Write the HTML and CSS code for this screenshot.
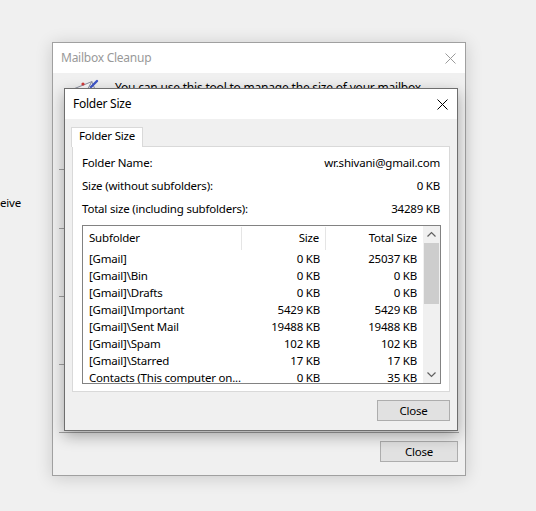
FILE: index.html
```html
<!DOCTYPE html>
<html lang="en">
<head>
<meta charset="utf-8">
<title>Folder Size</title>
<link rel="stylesheet" href="styles.css">
</head>
<body>
<div class="desktop">
  <span class="behind-text">eive</span>

  <div class="dialog outer">
    <div class="titlebar">
      <span class="title inactive">Mailbox Cleanup</span>
      <svg class="xbtn" width="11" height="11" viewBox="0 0 11 11"><path d="M0.5 0.5 L10.5 10.5 M10.5 0.5 L0.5 10.5" stroke="#9a9a9a" stroke-width="1"/></svg>
    </div>
    <div class="outer-body">
      <div class="intro">
        <svg class="intro-icon" width="32" height="32" viewBox="0 0 32 32">
          <g transform="rotate(-22 16 16)">
            <rect x="3" y="7" width="24" height="17" fill="#fafafa" stroke="#8a8fa0"/>
            <path d="M3 7 L15 17 L27 7" fill="none" stroke="#8a8fa0"/>
          </g>
          <circle cx="14" cy="6" r="1.6" fill="#d23b3b"/>
          <path d="M22 9 L28 3" stroke="#3e55c8" stroke-width="2.4" stroke-linecap="round"/>
        </svg>
        <p class="intro-text">You can use this tool to manage the size of your mailbox.</p>
      </div>
      <div class="groups">
        <div class="group g1"></div>
        <div class="group g2"></div>
        <div class="group g3"></div>
        <div class="group g4"></div>
      </div>
      <div class="footer">
        <div class="footer-rule"></div>
        <div class="footer-buttons">
          <button class="btn btn-outer">Close</button>
        </div>
      </div>
    </div>
  </div>

  <div class="dialog inner">
    <div class="titlebar">
      <span class="title">Folder Size</span>
      <svg class="xbtn" width="11" height="11" viewBox="0 0 11 11"><path d="M0.5 0.5 L10.5 10.5 M10.5 0.5 L0.5 10.5" stroke="#000" stroke-width="1"/></svg>
    </div>
    <div class="inner-body">
      <div class="tabs">
        <div class="tab">Folder Size</div>
      </div>
      <div class="panel">
        <div class="info-row"><span>Folder Name:</span><span>wr.shivani@gmail.com</span></div>
        <div class="info-row"><span>Size (without subfolders):</span><span>0 KB</span></div>
        <div class="info-row"><span>Total size (including subfolders):</span><span>34289 KB</span></div>
        <div class="list">
          <div class="table">
            <div class="hdr">
              <div class="cell c1 hcell">Subfolder</div>
              <div class="cell num hcell">Size</div>
              <div class="cell num">Total Size</div>
            </div>
            <div class="row"><div class="cell c1">[Gmail]</div><div class="cell num">0 KB</div><div class="cell num">25037 KB</div></div>
            <div class="row"><div class="cell c1">[Gmail]\Bin</div><div class="cell num">0 KB</div><div class="cell num">0 KB</div></div>
            <div class="row"><div class="cell c1">[Gmail]\Drafts</div><div class="cell num">0 KB</div><div class="cell num">0 KB</div></div>
            <div class="row"><div class="cell c1">[Gmail]\Important</div><div class="cell num">5429 KB</div><div class="cell num">5429 KB</div></div>
            <div class="row"><div class="cell c1">[Gmail]\Sent Mail</div><div class="cell num">19488 KB</div><div class="cell num">19488 KB</div></div>
            <div class="row"><div class="cell c1">[Gmail]\Spam</div><div class="cell num">102 KB</div><div class="cell num">102 KB</div></div>
            <div class="row"><div class="cell c1">[Gmail]\Starred</div><div class="cell num">17 KB</div><div class="cell num">17 KB</div></div>
            <div class="row"><div class="cell c1">Contacts (This computer on...</div><div class="cell num">0 KB</div><div class="cell num">35 KB</div></div>
          </div>
          <div class="scrollbar">
            <div class="sb-btn"><svg width="17" height="17" viewBox="0 0 17 17"><path d="M4.5 10.5 L8.5 6.5 L12.5 10.5" fill="none" stroke="#606060" stroke-width="1.2"/></svg></div>
            <div class="sb-thumb"></div>
            <div class="sb-track"></div>
            <div class="sb-btn"><svg width="17" height="17" viewBox="0 0 17 17"><path d="M4.5 6.5 L8.5 10.5 L12.5 6.5" fill="none" stroke="#606060" stroke-width="1.2"/></svg></div>
          </div>
        </div>
      </div>
      <div class="inner-footer">
        <button class="btn btn-inner">Close</button>
      </div>
    </div>
  </div>
</div>
</body>
</html>
```
FILE: styles.css
```css
* { box-sizing: border-box; }
html, body { margin: 0; padding: 0; }
body {
  background: #f0f0f0;
  font-family: "Noto Sans", "Open Sans", sans-serif;
  font-size: 11.5px;
  letter-spacing: -0.2px;
  color: #000;
}
.desktop {
  position: relative;
  width: 536px;
  height: 511px;
  overflow: hidden;
}
.behind-text {
  position: absolute;
  left: 0;
  top: 195px;
  line-height: 15px;
}

/* dialogs (windows on the desktop) */
.dialog {
  position: absolute;
  display: flex;
  flex-direction: column;
  background: #f0f0f0;
}
.outer {
  left: 52px;
  top: 42px;
  width: 414px;
  height: 434px;
  border: 1px solid #a0a0a0;
  box-shadow: 0 2px 16px rgba(0, 0, 0, 0.16);
}
.inner {
  left: 64px;
  top: 88px;
  width: 394px;
  height: 343px;
  border: 1px solid #6e6e6e;
  box-shadow: 0 5px 14px rgba(0, 0, 0, 0.32);
}
.titlebar {
  height: 30px;
  flex: none;
  background: #fff;
  display: flex;
  align-items: center;
  justify-content: space-between;
  padding: 0 9px 0 8px;
}
.title { line-height: 30px; font-size: 12px; letter-spacing: -0.25px; }
.title.inactive { color: #999; }
.xbtn { display: block; }

/* outer body */
.outer-body {
  flex: 1;
  display: flex;
  flex-direction: column;
}
.intro {
  display: flex;
  align-items: flex-start;
  height: 22px;
  padding: 7px 0 0 16px;
  gap: 14px;
}
.intro-icon { flex: none; margin-top: -2px; }
.intro-text {
  margin: 0;
  line-height: 15px;
  white-space: nowrap;
  font-size: 12px;
}
.groups {
  display: flex;
  flex-direction: column;
  padding-left: 6px;
  margin-top: 74px;
}
.group {
  width: 300px;
  border-top: 1px solid #a0a0a0;
}
.g1 { height: 59px; }
.g2 { height: 68px; }
.g3 { height: 68px; }
.g4 { height: 30px; }
.footer { margin-top: auto; }
.footer-rule {
  height: 1px;
  background: #a0a0a0;
  margin: 0 6px;
}
.footer-buttons {
  display: flex;
  justify-content: flex-end;
  padding: 8px 7px 13px;
}

/* buttons */
.btn {
  font: inherit;
  letter-spacing: inherit;
  color: #000;
  height: 21px;
  padding: 0;
  background: #e1e1e1;
  border: 1px solid #adadad;
  line-height: 19px;
  text-align: center;
}
.btn-outer { width: 78px; }
.btn-inner { width: 73px; }

/* inner body */
.inner-body {
  flex: 1;
  display: flex;
  flex-direction: column;
  padding: 8px 7px 9px 7px;
}
.tabs {
  display: flex;
  height: 19px;
}
.tab {
  position: relative;
  z-index: 1;
  width: 72px;
  height: 20px;
  margin-left: -1px;
  background: #fff;
  border: 1px solid #d9d9d9;
  border-bottom: none;
  line-height: 15px;
  padding-bottom: 4px;
  text-align: center;
}
.panel {
  height: 246px;
  background: #fff;
  border: 1px solid #d9d9d9;
  padding: 4px 8px 7px 9px;
  display: flex;
  flex-direction: column;
}
.info-row {
  display: flex;
  justify-content: space-between;
  line-height: 23px;
  padding-right: 1px;
}
.list {
  margin-top: 5px;
  height: 159px;
  border: 1px solid #828282;
  display: flex;
  overflow: hidden;
}
.table {
  width: 340px;
  overflow: hidden;
}
.hdr, .row {
  display: grid;
  grid-template-columns: 159px 84px 97px;
}
.hdr { height: 24px; align-items: stretch; }
.hdr .cell { line-height: 22px; margin-top: 1px; }
.hcell { border-right: 1px solid #e5e5e5; }
.row { height: 17px; line-height: 17px; }
.cell {
  white-space: nowrap;
  overflow: hidden;
  padding: 0 6px;
}
.num { text-align: right; }
.scrollbar {
  width: 17px;
  background: #f0f0f0;
  display: flex;
  flex-direction: column;
}
.sb-btn { height: 17px; flex: none; }
.sb-btn svg { display: block; }
.sb-thumb {
  height: 61px;
  margin: 0 1px;
  background: #cdcdcd;
}
.sb-track { flex: 1; }
.inner-footer {
  display: flex;
  justify-content: flex-end;
  margin-top: 8px;
}
```
